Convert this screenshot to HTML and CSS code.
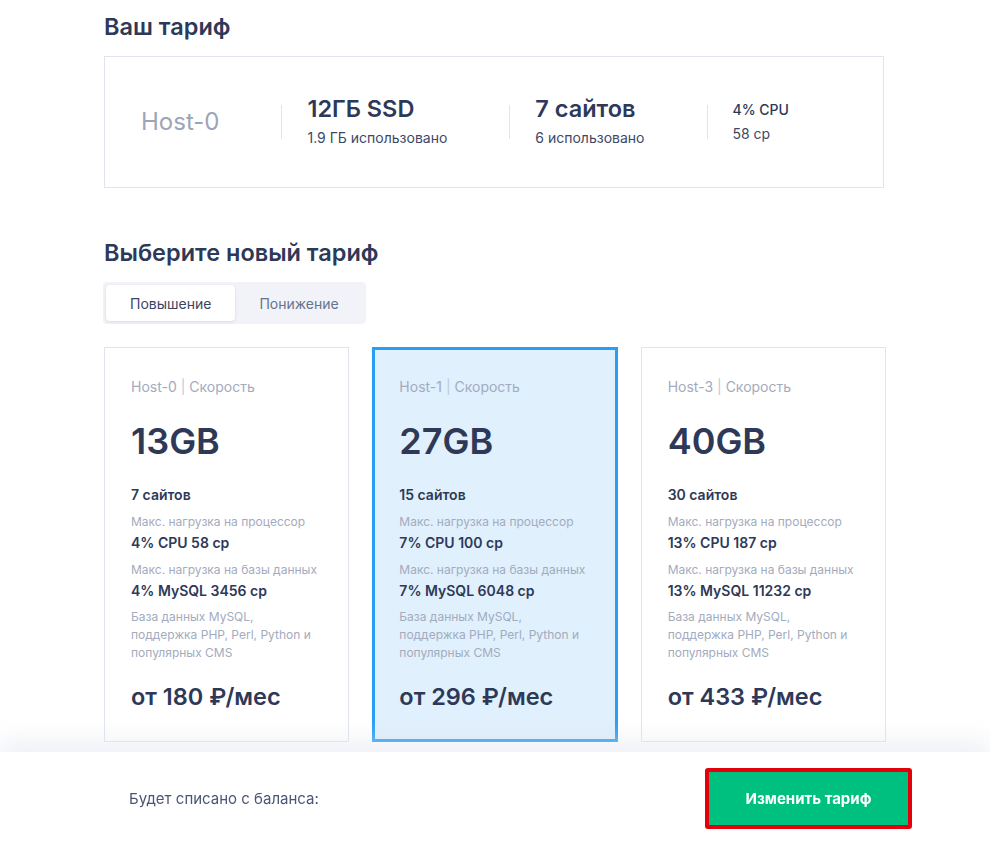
FILE: index.html
```html
<!DOCTYPE html>
<html lang="ru">
<head>
<meta charset="utf-8">
<title>Смена тарифа</title>
<link rel="stylesheet" href="styles.css">
</head>
<body>
<main class="page">
  <h1 class="title">Ваш тариф</h1>
  <section class="current">
    <div class="cur-item cur-name">Host-0</div>
    <div class="cur-sep"></div>
    <div class="cur-item">
      <div class="cur-big">12ГБ SSD</div>
      <div class="cur-small">1.9 ГБ использовано</div>
    </div>
    <div class="cur-sep"></div>
    <div class="cur-item">
      <div class="cur-big">7 сайтов</div>
      <div class="cur-small">6 использовано</div>
    </div>
    <div class="cur-sep"></div>
    <div class="cur-item">
      <div class="cur-mid">4% CPU</div>
      <div class="cur-small cur-small-2">58 ср</div>
    </div>
  </section>

  <h2 class="title title-2">Выберите новый тариф</h2>
  <div class="tabs">
    <button class="tab tab-active">Повышение</button>
    <button class="tab">Понижение</button>
  </div>

  <section class="plans">
    <article class="plan">
      <div class="plan-label">Host-0 <span class="bar">|</span> Скорость</div>
      <div class="plan-size">13GB</div>
      <div class="plan-strong plan-sites">7 сайтов</div>
      <div class="plan-muted plan-gap">Макс. нагрузка на процессор</div>
      <div class="plan-strong">4% CPU 58 ср</div>
      <div class="plan-muted plan-gap">Макс. нагрузка на базы данных</div>
      <div class="plan-strong">4% MySQL 3456 ср</div>
      <div class="plan-muted plan-desc">База данных MySQL,<br>поддержка PHP, Perl, Python и<br>популярных CMS</div>
      <div class="plan-price">от 180 ₽/мес</div>
    </article>
    <article class="plan plan-selected">
      <div class="plan-label">Host-1 <span class="bar">|</span> Скорость</div>
      <div class="plan-size">27GB</div>
      <div class="plan-strong plan-sites">15 сайтов</div>
      <div class="plan-muted plan-gap">Макс. нагрузка на процессор</div>
      <div class="plan-strong">7% CPU 100 ср</div>
      <div class="plan-muted plan-gap">Макс. нагрузка на базы данных</div>
      <div class="plan-strong">7% MySQL 6048 ср</div>
      <div class="plan-muted plan-desc">База данных MySQL,<br>поддержка PHP, Perl, Python и<br>популярных CMS</div>
      <div class="plan-price">от 296 ₽/мес</div>
    </article>
    <article class="plan">
      <div class="plan-label">Host-3 <span class="bar">|</span> Скорость</div>
      <div class="plan-size">40GB</div>
      <div class="plan-strong plan-sites">30 сайтов</div>
      <div class="plan-muted plan-gap">Макс. нагрузка на процессор</div>
      <div class="plan-strong">13% CPU 187 ср</div>
      <div class="plan-muted plan-gap">Макс. нагрузка на базы данных</div>
      <div class="plan-strong">13% MySQL 11232 ср</div>
      <div class="plan-muted plan-desc">База данных MySQL,<br>поддержка PHP, Perl, Python и<br>популярных CMS</div>
      <div class="plan-price">от 433 ₽/мес</div>
    </article>
  </section>
</main>

<footer class="footer">
  <div class="footer-text">Будет списано с баланса:</div>
  <button class="submit">Изменить тариф</button>
</footer>
</body>
</html>
```

FILE: styles.css
```css
* {
  box-sizing: border-box;
}

html, body {
  margin: 0;
  padding: 0;
  background: #ffffff;
}

body {
  font-family: Inter, "Noto Sans", "DejaVu Sans", sans-serif;
  color: #2e3958;
}

.page {
  width: 782px;
  margin: 0 auto;
  padding: 12px 0 120px;
}

.title {
  margin: 0 0 14px;
  font-size: 23.5px;
  line-height: 30px;
  font-weight: 600;
  color: #2e3958;
}

.title-2 {
  margin-top: 50px;
}

/* current plan */
.current {
  width: 780px;
  height: 132px;
  border: 1px solid #e1e4ed;
  display: flex;
  align-items: center;
  padding-left: 36px;
}

.cur-item {
  padding: 0 62px 0 25px;
}

.cur-name {
  padding-left: 0;
  font-size: 24px;
  line-height: 30px;
  color: #9ba5ba;
}

.cur-sep {
  width: 1px;
  height: 34px;
  background: #e1e4ed;
}

.cur-big {
  font-size: 23.5px;
  line-height: 26px;
  font-weight: 600;
  color: #2e3958;
}

.cur-mid {
  font-size: 14px;
  line-height: 20px;
  font-weight: 500;
  color: #2e3958;
}

.cur-small {
  font-size: 14px;
  line-height: 20px;
  color: #3e4866;
  margin-top: 6px;
}

.cur-small-2 {
  margin-top: 4px;
}

/* tabs */
.tabs {
  display: inline-flex;
  background: #f1f3f8;
  border-radius: 4px;
  padding: 3px;
  height: 42px;
  margin-left: -1px;
}

.tab {
  font-family: inherit;
  font-size: 14px;
  border: 0;
  background: transparent;
  color: #66738f;
  padding: 0 24px 0 24px;
  border-radius: 4px;
  cursor: pointer;
}

.tab-active {
  background: #ffffff;
  color: #3b4563;
  box-shadow: 0 1px 3px rgba(30, 40, 70, 0.12);
}

/* plan cards */
.plans {
  display: grid;
  grid-template-columns: repeat(3, 1fr);
  gap: 23px;
  margin-top: 23px;
}

.plan {
  border: 1px solid #e1e4ed;
  background: #ffffff;
  padding: 29px 10px 28px 26px;
  height: 395px;
  white-space: nowrap;
}

.plan-selected {
  border: 3px solid #2a9df4;
  background: #e0f0fc;
  padding: 27px 8px 26px 24px;
}

.plan-label {
  font-size: 14px;
  line-height: 20px;
  color: #a3abbe;
}

.bar {
  color: #c2c8d6;
}

.plan-size {
  margin-top: 22px;
  font-size: 36px;
  line-height: 44px;
  font-weight: 600;
  color: #2e3958;
}

.plan-strong {
  margin-top: 2px;
  font-size: 14px;
  line-height: 20px;
  font-weight: 600;
  color: #2e3958;
}

.plan-sites {
  margin-top: 22px;
}

.plan-muted {
  font-size: 12px;
  line-height: 18px;
  color: #a3abbe;
}

.plan-gap {
  margin-top: 8px;
}

.plan-desc {
  margin-top: 7px;
}

.plan-price {
  margin-top: 19px;
  font-size: 23.5px;
  line-height: 32px;
  font-weight: 600;
  color: #2e3958;
}

/* footer */
.footer {
  position: fixed;
  left: 0;
  right: 0;
  bottom: 0;
  height: 92px;
  background: #ffffff;
  display: flex;
  align-items: center;
  justify-content: space-between;
  padding: 0 78px 0 129px;
  box-shadow: 0 -10px 24px rgba(225, 229, 240, 0.6);
}

.footer-text {
  font-size: 15px;
  color: #4a5577;
}

.submit {
  font-family: inherit;
  width: 207px;
  height: 61px;
  border: 4px solid #e3000b;
  border-radius: 3px;
  background: #00c080;
  color: #ffffff;
  font-size: 15px;
  font-weight: 700;
  cursor: pointer;
}
```
